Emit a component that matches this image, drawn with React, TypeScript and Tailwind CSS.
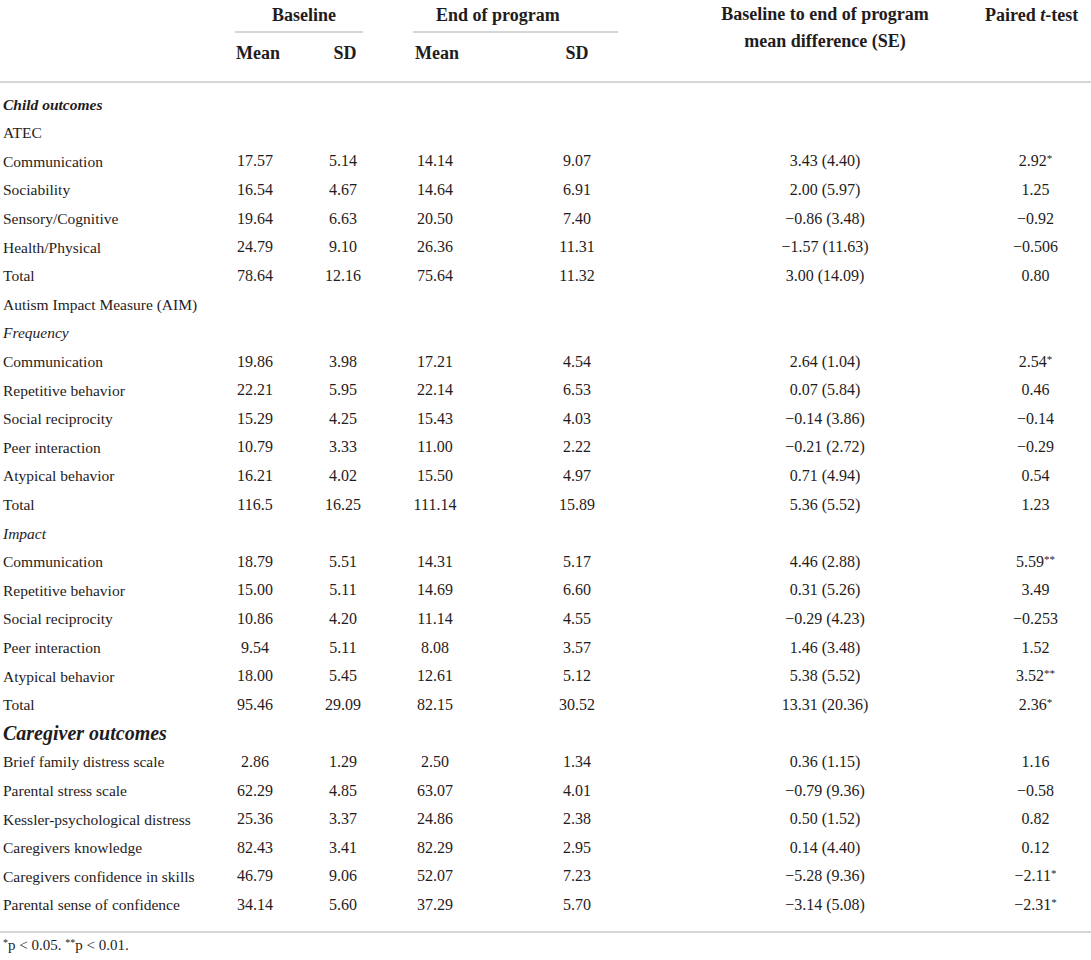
import React from "react";

type Row =
  | { kind: "section"; label: string; big?: boolean }
  | { kind: "sub"; label: string; italic?: boolean }
  | { kind: "data"; label: string; v: [string, string, string, string, string, string] };

const rows: Row[] = [
  { kind: "section", label: "Child outcomes" },
  { kind: "sub", label: "ATEC" },
  { kind: "data", label: "Communication", v: ["17.57", "5.14", "14.14", "9.07", "3.43 (4.40)", "2.92*"] },
  { kind: "data", label: "Sociability", v: ["16.54", "4.67", "14.64", "6.91", "2.00 (5.97)", "1.25"] },
  { kind: "data", label: "Sensory/Cognitive", v: ["19.64", "6.63", "20.50", "7.40", "\u22120.86 (3.48)", "\u22120.92"] },
  { kind: "data", label: "Health/Physical", v: ["24.79", "9.10", "26.36", "11.31", "\u22121.57 (11.63)", "\u22120.506"] },
  { kind: "data", label: "Total", v: ["78.64", "12.16", "75.64", "11.32", "3.00 (14.09)", "0.80"] },
  { kind: "sub", label: "Autism Impact Measure (AIM)" },
  { kind: "sub", label: "Frequency", italic: true },
  { kind: "data", label: "Communication", v: ["19.86", "3.98", "17.21", "4.54", "2.64 (1.04)", "2.54*"] },
  { kind: "data", label: "Repetitive behavior", v: ["22.21", "5.95", "22.14", "6.53", "0.07 (5.84)", "0.46"] },
  { kind: "data", label: "Social reciprocity", v: ["15.29", "4.25", "15.43", "4.03", "\u22120.14 (3.86)", "\u22120.14"] },
  { kind: "data", label: "Peer interaction", v: ["10.79", "3.33", "11.00", "2.22", "\u22120.21 (2.72)", "\u22120.29"] },
  { kind: "data", label: "Atypical behavior", v: ["16.21", "4.02", "15.50", "4.97", "0.71 (4.94)", "0.54"] },
  { kind: "data", label: "Total", v: ["116.5", "16.25", "111.14", "15.89", "5.36 (5.52)", "1.23"] },
  { kind: "sub", label: "Impact", italic: true },
  { kind: "data", label: "Communication", v: ["18.79", "5.51", "14.31", "5.17", "4.46 (2.88)", "5.59**"] },
  { kind: "data", label: "Repetitive behavior", v: ["15.00", "5.11", "14.69", "6.60", "0.31 (5.26)", "3.49"] },
  { kind: "data", label: "Social reciprocity", v: ["10.86", "4.20", "11.14", "4.55", "\u22120.29 (4.23)", "\u22120.253"] },
  { kind: "data", label: "Peer interaction", v: ["9.54", "5.11", "8.08", "3.57", "1.46 (3.48)", "1.52"] },
  { kind: "data", label: "Atypical behavior", v: ["18.00", "5.45", "12.61", "5.12", "5.38 (5.52)", "3.52**"] },
  { kind: "data", label: "Total", v: ["95.46", "29.09", "82.15", "30.52", "13.31 (20.36)", "2.36*"] },
  { kind: "section", label: "Caregiver outcomes", big: true },
  { kind: "data", label: "Brief family distress scale", v: ["2.86", "1.29", "2.50", "1.34", "0.36 (1.15)", "1.16"] },
  { kind: "data", label: "Parental stress scale", v: ["62.29", "4.85", "63.07", "4.01", "\u22120.79 (9.36)", "\u22120.58"] },
  { kind: "data", label: "Kessler-psychological distress", v: ["25.36", "3.37", "24.86", "2.38", "0.50 (1.52)", "0.82"] },
  { kind: "data", label: "Caregivers knowledge", v: ["82.43", "3.41", "82.29", "2.95", "0.14 (4.40)", "0.12"] },
  { kind: "data", label: "Caregivers confidence in skills", v: ["46.79", "9.06", "52.07", "7.23", "\u22125.28 (9.36)", "\u22122.11*"] },
  { kind: "data", label: "Parental sense of confidence", v: ["34.14", "5.60", "37.29", "5.70", "\u22123.14 (5.08)", "\u22122.31*"] },
];

const GRID = "grid grid-cols-[210px_90px_86px_98px_186px_310px_1fr]";

function Val({ s }: { s: string }) {
  const m = s.match(/^([^*]*)(\**)$/);
  const base = m ? m[1] : s;
  const stars = m ? m[2] : "";
  return (
    <span>
      {base}
      {stars && <span className="text-[11px] relative top-[-4px]">{stars}</span>}
    </span>
  );
}

export default function App() {
  return (
    <div className="w-[1091px] h-[960px] bg-white text-[#1f1c1d] font-['Liberation_Serif',serif] text-[16px] overflow-hidden">
      {/* Header */}
      <div className={`${GRID} grid-rows-[33px_48px] text-[18px]`}>
        <div />
        <div className="col-span-2 flex flex-col">
          <div className="pt-[4px] h-[31px] leading-[22px] text-center font-bold pl-[12px]">Baseline</div>
          <div className="ml-[25px] mr-[23px] h-[2px] bg-[#d6d6d6]" />
        </div>
        <div className="col-span-2 flex flex-col">
          <div className="pt-[4px] h-[31px] leading-[22px] font-bold pl-[50px]">End of program</div>
          <div className="ml-[27px] mr-[52px] h-[2px] bg-[#d6d6d6]" />
        </div>
        <div className="row-span-2 text-center font-bold leading-[27px] pt-[1px]">
          Baseline to end of program
          <br />
          mean difference (SE)
        </div>
        <div className="row-span-2 font-bold leading-[22px] pt-[4px] pl-[5px] whitespace-nowrap">
          Paired <span className="italic">t</span>-test
        </div>
        <div />
        <div className="text-center font-bold pt-[9px] leading-[22px] pl-[6px]">Mean</div>
        <div className="text-center font-bold pt-[9px] leading-[22px] pl-[4px]">SD</div>
        <div className="text-center font-bold pt-[9px] leading-[22px] pl-[4px]">Mean</div>
        <div className="text-center font-bold pt-[9px] leading-[22px]">SD</div>
      </div>
      <div className="h-[2px] bg-[#d6d6d6]" />

      {/* Body */}
      <div className="pt-[7px]">
        {rows.map((r, i) => {
          if (r.kind === "section") {
            return (
              <div key={i} className="h-[28.6px] flex items-center pl-[3px]">
                <span className={`font-bold italic ${r.big ? "text-[20px]" : "text-[15.5px]"}`}>{r.label}</span>
              </div>
            );
          }
          if (r.kind === "sub") {
            return (
              <div key={i} className="h-[28.6px] flex items-center pl-[3px] text-[15.5px]">
                <span className={r.italic ? "italic" : ""}>{r.label}</span>
              </div>
            );
          }
          return (
            <div key={i} className={`${GRID} h-[28.6px] items-center`}>
              <div className="pl-[3px] whitespace-nowrap text-[15.5px]">{r.label}</div>
              {r.v.map((s, j) => (
                <div key={j} className="text-center whitespace-nowrap">
                  <Val s={s} />
                </div>
              ))}
            </div>
          );
        })}
      </div>

      <div className="mt-[12px] h-[2px] bg-[#d6d6d6]" />
      <div className="pt-[3px] pl-[3px] text-[15px] leading-[18px]">
        <span className="text-[10px] relative top-[-4px]">*</span>p &lt; 0.05.{" "}
        <span className="text-[10px] relative top-[-4px]">**</span>p &lt; 0.01.
      </div>
    </div>
  );
}
